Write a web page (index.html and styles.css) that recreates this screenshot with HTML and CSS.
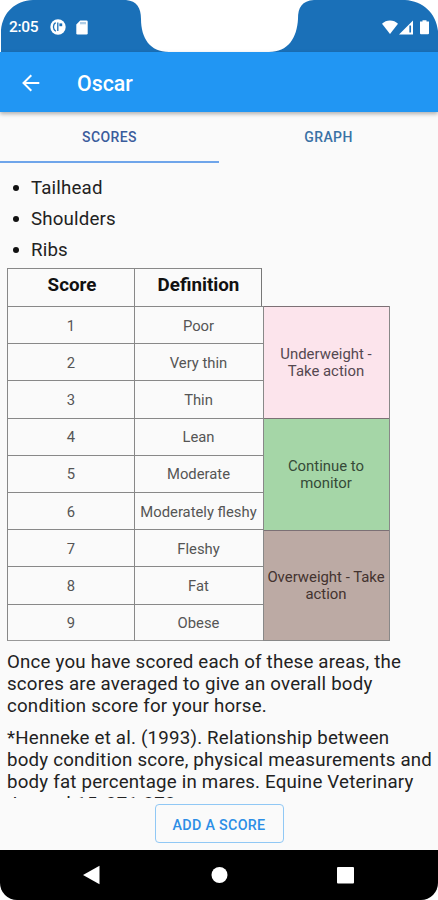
FILE: index.html
```html
<!DOCTYPE html>
<html lang="en">
<head>
    <meta charset="UTF-8">
    <meta name="viewport" content="width=device-width, initial-scale=1.0">
    <title>Oscar</title>
    <link rel="stylesheet" href="styles.css">
</head>
<body>
    <div class="phone">
        <!-- Status bar -->
        <div class="status-bar">
            <svg class="status-shape" width="438" height="52" viewBox="0 0 438 52">
                <path fill="#1a70b8" d="M1 52V30C3 12 15 1 33 0H126C137 1 141 8 141 19C141 38 150 52 169 52Z"/>
                <path fill="#1a70b8" d="M269 52C288 52 297 38 298 19C298 7 302 1 314 0H405C423 1 436 13 438 31V52Z"/>
            </svg>
            <span class="time">2:05</span>
            <svg class="status-app" width="16" height="16" viewBox="0 0 16 16">
                <circle cx="8" cy="8" r="7.7" fill="#fff"/>
                <path d="M5.6 3.6C2.6 5.6 2.8 10.4 5.8 12.2M7.8 3.4V12" fill="none" stroke="#1a70b8" stroke-width="1.3"/>
                <rect x="9.4" y="4.4" width="2.8" height="2.8" fill="#1a70b8"/>
            </svg>
            <svg class="status-card" width="12" height="15" viewBox="0 0 12 15">
                <path fill="#fff" d="M4.2 0.5H10.5Q11.7 0.5 11.7 1.7V13.3Q11.7 14.5 10.5 14.5H1.5Q0.3 14.5 0.3 13.3V4.5Z"/>
                <path stroke="#1a70b8" stroke-width="1" stroke-opacity="0.7" d="M5 2V4.3M7 2V4.3M9 2V4.3"/>
            </svg>
            <svg class="status-right" width="48" height="15" viewBox="0 0 48 15">
                <path fill="#fff" d="M0 3.8C4-0.7 12-0.7 16 3.8L8 14Z"/>
                <path fill="#fff" d="M17 14.5L31 0.5V14.5Z"/>
                <path stroke="#1a70b8" stroke-width="1.7" d="M28.2 5.5V12.5"/>
                <path fill="#fff" d="M40.5 0.3H44.5V1.6H47V13.2Q47 14.3 46 14.3H39Q38 14.3 38 13.2V1.6H40.5Z"/>
            </svg>
        </div>

        <!-- App bar -->
        <header class="app-bar">
            <svg width="18" height="18" viewBox="0 0 18 18" fill="none" stroke="#fff" stroke-width="2">
                <path d="M17.3 9H1.5M9.3 1.2L1.5 9L9.3 16.8"/>
            </svg>
            <h1>Oscar</h1>
        </header>

        <nav class="tabs">
            <div class="tab active">SCORES</div>
            <div class="tab">GRAPH</div>
        </nav>

        <main class="content">
            <ul class="areas">
                <li>Tailhead</li>
                <li>Shoulders</li>
                <li>Ribs</li>
            </ul>

            <!-- Scores on the left, what to do about them on the right -->
            <div class="score-chart">
                <div class="scores">
                    <div class="row head"><span>Score</span><span>Definition</span></div>
                    <div class="row"><span>1</span><span>Poor</span></div>
                    <div class="row"><span>2</span><span>Very thin</span></div>
                    <div class="row"><span>3</span><span>Thin</span></div>
                    <div class="row"><span>4</span><span>Lean</span></div>
                    <div class="row"><span>5</span><span>Moderate</span></div>
                    <div class="row"><span>6</span><span class="wide">Moderately fleshy</span></div>
                    <div class="row"><span>7</span><span>Fleshy</span></div>
                    <div class="row"><span>8</span><span>Fat</span></div>
                    <div class="row"><span>9</span><span>Obese</span></div>
                </div>
                <div class="actions">
                    <div class="action under">Underweight -<br>Take action</div>
                    <div class="action normal">Continue to<br>monitor</div>
                    <div class="action over">Overweight - Take<br>action</div>
                </div>
            </div>

            <p>Once you have scored each of these areas, the<br>scores are averaged to give an overall body<br>condition score for your horse.</p>
            <p class="reference">*Henneke et al. (1993). Relationship between<br>body condition score, physical measurements and<br>body fat percentage in mares. Equine Veterinary<br>Journal 15, 371-372.</p>
        </main>

        <div class="bottom">
            <button class="add-button">ADD A SCORE</button>
        </div>

        <!-- Android navigation -->
        <div class="nav-bar">
            <svg width="438" height="50" viewBox="0 0 438 50" fill="#fff">
                <path d="M83 25L99.5 15.8V34.2Z"/>
                <circle cx="219.5" cy="25" r="8"/>
                <rect x="337" y="17" width="17" height="16.5" rx="1"/>
            </svg>
        </div>
    </div>
</body>
</html>
```
FILE: styles.css
```css
* {
    box-sizing: border-box;
}

body {
    margin: 0;
    font-family: Roboto, sans-serif;
    color: #222;
    background-color: white;
}

.phone {
    display: flex;
    flex-direction: column;
    width: 438px;
    height: 900px;
    overflow: hidden;
}

.status-bar {
    position: relative;
    display: flex;
    align-items: center;
    height: 52px;
    padding: 2px 8px 0 9px;
    flex: none;
}

.status-shape {
    position: absolute;
    top: 0;
    left: 0;
    z-index: -1;
}

.time {
    width: 30px;
    font-size: 15.5px;
    font-weight: 500;
    letter-spacing: -0.3px;
    color: white;
}

.status-app {
    margin-left: 11px;
}

.status-card {
    margin-left: 10px;
}

.status-right {
    margin-left: auto;
}

.app-bar {
    position: relative;
    display: flex;
    align-items: center;
    height: 60px;
    padding: 2px 22px 0;
    background-color: #2196f3;
    box-shadow: 0 2px 4px rgba(0, 0, 0, 0.3);
    flex: none;
}

.app-bar h1 {
    margin: 0 0 0 37px;
    font-size: 21.3px;
    font-weight: 500;
    color: white;
}

.tabs {
    display: flex;
    height: 51px;
    background-color: #fafafa;
    flex: none;
}

.app-bar + .tabs {
    z-index: -1;
}

.tab {
    display: flex;
    align-items: center;
    justify-content: center;
    width: 219px;
    padding-top: 1px;
    border-bottom: 2px solid transparent;
    font-size: 14px;
    font-weight: 500;
    letter-spacing: 0.4px;
    color: #3a72a5;
}

.tab.active {
    border-color: #6fa5ea;
    color: #3a5c9c;
}

.content {
    height: 635px;
    padding: 9px 0 0 7px;
    background-color: #fafafa;
    overflow: hidden;
    flex: none;
}

.areas {
    margin: 0 0 3px;
    padding: 0;
    list-style: none;
    font-size: 18.7px;
    letter-spacing: 0.17px;
}

.areas li {
    display: flex;
    align-items: center;
    height: 31px;
}

.areas li::before {
    content: "";
    width: 6px;
    height: 6px;
    margin: 0 12px 0 6px;
    border-radius: 50%;
    background-color: #111;
}

.score-chart {
    display: flex;
    align-items: flex-end;
    height: 373px;
    font-size: 14.8px;
    color: #555;
}

.scores {
    width: 256px;
    height: 373px;
}

.row {
    display: grid;
    grid-template-columns: 127px 129px;
    height: 37.2px;
}

.row span {
    display: flex;
    align-items: center;
    justify-content: center;
    padding: 1px 1px 0 0;
    border-top: 1px solid #888;
    border-left: 1px solid #888;
}

.row span:first-child {
    padding: 1px 0 0;
}

.row:last-child span {
    border-bottom: 1px solid #999;
}

.row .wide {
    white-space: nowrap;
}

.row.head {
    width: 255px;
    height: 38px;
    grid-template-columns: 127px 128px;
    font-size: 18.8px;
    font-weight: 700;
    color: #111;
}

.row.head span {
    padding: 0 0 5px 2px;
}

.row.head span:last-child {
    padding: 0 0 5px 1px;
    border-right: 1px solid #777;
}

.actions {
    width: 127px;
    border: 1px solid #888;
    border-top: none;
}

.action {
    display: flex;
    align-items: center;
    justify-content: center;
    height: 112px;
    padding-right: 1px;
    border-top: 1px solid #7c7075;
    font-size: 14.9px;
    line-height: 17px;
    text-align: center;
    white-space: nowrap;
    color: #544850;
}

.action.under {
    background-color: #fce4ec;
}

.action.normal {
    background-color: #a5d6a7;
    color: #354a38;
}

.action.over {
    height: 110px;
    background-color: #bcaaa4;
    color: #43332f;
}

.content p {
    margin: 10px 0 0;
    font-size: 18.7px;
    line-height: 22.2px;
    letter-spacing: 0.21px;
    white-space: nowrap;
}

.content p.reference {
    margin-top: 9px;
}

.bottom {
    display: flex;
    justify-content: center;
    height: 52px;
    padding-top: 6px;
    background-color: #fafafa;
    flex: none;
}

.add-button {
    width: 129px;
    height: 39px;
    padding: 2px 0 0;
    border: 1px solid #90c8f5;
    border-radius: 4px;
    background: none;
    font-family: inherit;
    font-size: 14.3px;
    font-weight: 500;
    letter-spacing: 0.3px;
    color: #2c8ee6;
}

.nav-bar {
    height: 50px;
    border-radius: 0 0 17px 17px;
    background-color: black;
    overflow: hidden;
    flex: none;
}
```
